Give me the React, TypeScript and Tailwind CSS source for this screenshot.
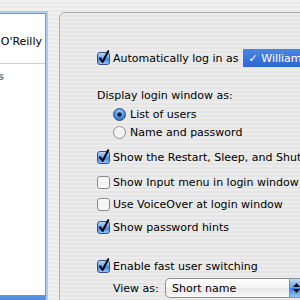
import React from "react";

function Check({ on }: { on: boolean }) {
  return (
    <svg width="13" height="13" viewBox="0 0 13 13" className="shrink-0 overflow-visible">
      <defs>
        <linearGradient id="cbBlue" x1="0" y1="0" x2="0" y2="1">
          <stop offset="0" stopColor="#c4ddf8" />
          <stop offset="0.45" stopColor="#6ea6ea" />
          <stop offset="0.55" stopColor="#3f83de" />
          <stop offset="1" stopColor="#9fd0fb" />
        </linearGradient>
        <linearGradient id="cbWhite" x1="0" y1="0" x2="0" y2="1">
          <stop offset="0" stopColor="#ffffff" />
          <stop offset="0.5" stopColor="#f2f2f2" />
          <stop offset="1" stopColor="#fdfdfd" />
        </linearGradient>
      </defs>
      <rect
        x="0.5"
        y="0.5"
        width="12"
        height="12"
        rx="2.5"
        fill={on ? "url(#cbBlue)" : "url(#cbWhite)"}
        stroke={on ? "#2d5590" : "#8a8a8a"}
      />
      {on && (
        <path
          d="M3 6.2 L5.6 10 L11.2 -0.8"
          fill="none"
          stroke="#000"
          strokeWidth="2"
          strokeLinecap="round"
          strokeLinejoin="round"
        />
      )}
    </svg>
  );
}

function Radio({ on }: { on: boolean }) {
  return (
    <svg width="13" height="13" viewBox="0 0 13 13" className="shrink-0">
      <defs>
        <radialGradient id="rbBlue" cx="0.5" cy="0.35" r="0.7">
          <stop offset="0" stopColor="#bcd8f7" />
          <stop offset="0.6" stopColor="#4b8be0" />
          <stop offset="1" stopColor="#2c64c0" />
        </radialGradient>
        <linearGradient id="rbWhite" x1="0" y1="0" x2="0" y2="1">
          <stop offset="0" stopColor="#ffffff" />
          <stop offset="0.5" stopColor="#f0f0f0" />
          <stop offset="1" stopColor="#fcfcfc" />
        </linearGradient>
      </defs>
      <circle
        cx="6.5"
        cy="6.5"
        r="6"
        fill={on ? "url(#rbBlue)" : "url(#rbWhite)"}
        stroke={on ? "#2d5590" : "#8a8a8a"}
      />
      {on && <circle cx="6.5" cy="6.5" r="2.3" fill="#10204a" />}
    </svg>
  );
}

function CheckRow({ on, label, className }: { on: boolean; label: string; className: string }) {
  return (
    <div className={`flex items-center h-[18px] gap-[3px] whitespace-nowrap ${className}`}>
      <Check on={on} />
      <span className="leading-[18px] pt-[2px]">{label}</span>
    </div>
  );
}

function RadioRow({ on, label, className }: { on: boolean; label: string; className: string }) {
  return (
    <div className={`flex items-center h-[18px] gap-[4px] whitespace-nowrap ml-[16px] ${className}`}>
      <Radio on={on} />
      <span className="leading-[18px] pt-[2px]">{label}</span>
    </div>
  );
}

export default function App() {
  return (
    <div className="w-[300px] h-[300px] overflow-hidden flex bg-[image:repeating-linear-gradient(to_bottom,#f1f1f1_0px,#f1f1f1_2px,#e9e9e9_2px,#e9e9e9_4px)] font-['DejaVu_Sans',sans-serif] text-[11px] text-black">
      {/* Left list */}
      <div className="w-[46px] shrink-0 mt-[13px] bg-white border-t border-r border-[#7d98c4] shadow-[0_0_0_2px_#aecbf0] flex flex-col overflow-hidden">
        <div className="mt-[21px] h-[14px] flex justify-end pr-[3px] whitespace-nowrap leading-[14px]">
          William O'Reilly
        </div>
        <div className="mt-[14px] h-px bg-[#cfcfcf] shrink-0" />
        <div className="mt-[7px] h-[12px] flex justify-end pr-[41px] whitespace-nowrap leading-[12px] text-[10px] font-bold text-[#808080]">
          Other Accounts
        </div>
        <div className="mt-[212px] h-[20px] shrink-0 bg-[linear-gradient(to_bottom,#5b95e4,#2866d4)]" />
      </div>

      {/* Group box */}
      <div className="ml-[13px] mt-[12px] w-[270px] h-[310px] shrink-0 border border-[#afafaf] rounded-[6px] bg-[image:repeating-linear-gradient(to_bottom,#ececec_0px,#ececec_2px,#e5e5e5_2px,#e5e5e5_4px)] flex flex-col pl-[37px]">
        <div className="mt-[36px] flex items-center h-[18px] gap-[3px] whitespace-nowrap">
          <Check on={true} />
          <span className="leading-[18px] pt-[2px]">Automatically log in as</span>
          <div className="ml-[1px] h-[18px] w-[80px] shrink-0 bg-[linear-gradient(to_bottom,#4c86e2,#2d66d3)] text-white flex items-center pl-[6px]">
            <span className="leading-[18px] pt-[2px]">✓ William O'Reilly</span>
          </div>
        </div>

        <div className="mt-[19px] h-[18px] flex items-center whitespace-nowrap">
          <span className="leading-[18px] pt-[2px]">Display login window as:</span>
        </div>

        <RadioRow on={true} label="List of users" className="mt-[1px]" />
        <RadioRow on={false} label="Name and password" className="mt-0" />

        <CheckRow on={true} label="Show the Restart, Sleep, and Shut Down buttons" className="mt-[7px]" />
        <CheckRow on={false} label="Show Input menu in login window" className="mt-[7px]" />
        <CheckRow on={false} label="Use VoiceOver at login window" className="mt-[4px]" />
        <CheckRow on={true} label="Show password hints" className="mt-[5px]" />

        <CheckRow on={true} label="Enable fast user switching" className="mt-[21px]" />

        <div className="mt-[3px] ml-[16px] h-[20px] flex items-center whitespace-nowrap">
          <span className="w-[52px] shrink-0 leading-[18px] pt-[2px]">View as:</span>
          <div className="h-[20px] w-[145px] shrink-0 flex items-center rounded-[5px] border border-[#8f8f8f] bg-[linear-gradient(to_bottom,#ffffff,#f3f3f3_50%,#e6e6e6_55%,#fafafa)] overflow-hidden">
            <span className="flex-1 pl-[6px] leading-[18px] pt-[2px]">Short name</span>
            <div className="w-[20px] h-full border-l border-[#6f8fc0] bg-[linear-gradient(to_bottom,#bfdaf8,#6aa3ea_48%,#3a7fdc_52%,#93c6f8)] flex flex-col items-start justify-center gap-[2px] pl-[3px]">
              <svg width="7" height="4" viewBox="0 0 7 4">
                <path d="M0 4 L3.5 0 L7 4 Z" fill="#111" />
              </svg>
              <svg width="7" height="4" viewBox="0 0 7 4">
                <path d="M0 0 L3.5 4 L7 0 Z" fill="#111" />
              </svg>
            </div>
          </div>
        </div>
      </div>
    </div>
  );
}
